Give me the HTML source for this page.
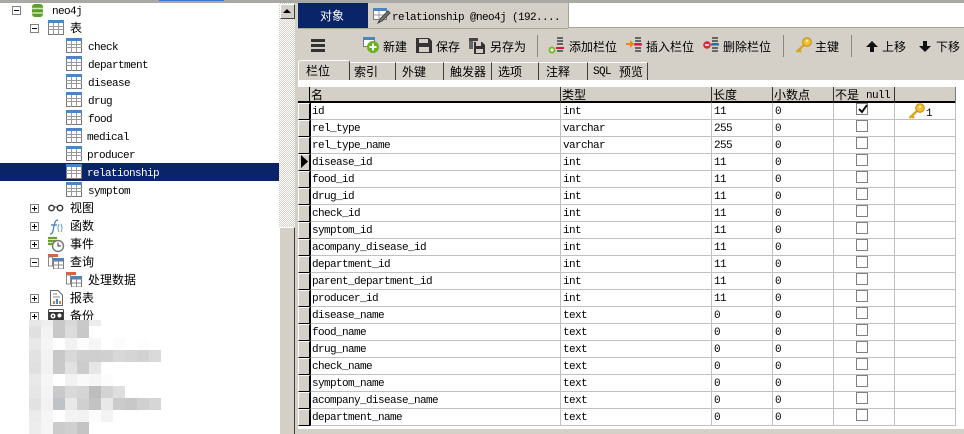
<!DOCTYPE html>
<html><head><meta charset="utf-8">
<style>
html,body{margin:0;padding:0;background:#fff}
#p{position:relative;width:964px;height:434px;overflow:hidden;background:#fff;font-family:"Liberation Mono","WenQuanYi Zen Hei","Noto Sans CJK SC",monospace;font-size:11px;letter-spacing:-.6px;color:#000}
#p div,#p svg{position:absolute}
.t{white-space:nowrap;line-height:14px;height:14px}
.c{font-family:"WenQuanYi Zen Hei","Noto Sans CJK SC",sans-serif;font-size:12px;letter-spacing:0}
.b{width:7px;height:7px;border:1px solid #808080;background:#fff}
.b:before{content:"";position:absolute;left:1px;top:3px;width:5px;height:1px;background:#000}
.p:after{content:"";position:absolute;left:3px;top:1px;width:1px;height:5px;background:#000}
.tab{top:62px;height:18px;background:#d4d0c8;border-right:1px solid #404040;border-top:1px solid #fff;box-sizing:border-box}
table{position:absolute;left:298px;top:103px;border-collapse:separate;border-spacing:0;table-layout:fixed;width:658px}
td{box-sizing:border-box;height:17px;padding:3px 0 0 2px;border-right:1px solid #c0c0c0;border-bottom:1px solid #c0c0c0;font-size:11px;line-height:13px;white-space:nowrap;overflow:hidden;vertical-align:top}
td:first-child{background:#d4d0c8;border-left:1px solid #fff;border-top:1px solid #fff;border-right:1px solid #000;border-bottom:1px solid #000;padding:0}
td:nth-child(2){border-left:1px solid #000;padding-left:1px;border-right:1px solid #c0c0c0}
td.k{padding:0}
td i{display:block;width:10px;height:10px;border:1px solid #808080;background:#fff;margin:0 0 0 22px;position:relative}
</style></head><body>
<div id="p">
<svg width="0" height="0" style="left:0;top:0">
<defs>
<g id="tb"><rect x=".5" y=".5" width="15" height="14" fill="#fff" stroke="#777"/><rect x="0" y="0" width="16" height="3" fill="#4a86c5"/><path d="M0 6.5H16M0 9.5H16M5.5 3V15M10.5 3V15" stroke="#999" fill="none"/></g>
<g id="qr"><rect x="0" y="0" width="10" height="3" fill="#e0603e"/><rect x=".5" y="3" width="4" height="9" fill="#fff" stroke="#888"/><rect x="5" y="4" width="11" height="3" fill="#4a86c5"/><rect x="5.5" y="7" width="10" height="8" fill="#fff" stroke="#777"/><path d="M5 11H16M10.5 7V15" stroke="#888"/></g>
<g id="ky"><circle cx="12" cy="5" r="4.3" fill="#f5c02c" stroke="#c08a10"/><path d="M9 8L1.5 15M4 13l2 2" stroke="#d9a520" stroke-width="2.4" fill="none"/><circle cx="12" cy="4" r="1.2" fill="#fff3b0"/></g>
<g id="ln"><path d="M9 1H15M9 4H15M9 7H15M9 14H15M9 11H15" stroke="#666" stroke-width="2"/></g>
</defs></svg>

<!-- top line -->
<div style="left:0;top:0;width:964px;height:3px;background:#a8a8a4"></div>
<div style="left:159px;top:0;width:65px;height:1px;background:#3a78d8"></div>

<!-- tree -->
<div style="left:0;top:163px;width:279px;height:18px;background:#0a246a"></div>
<div class="b" style="left:12px;top:6px"></div>
<svg style="left:31px;top:3px" width="14" height="15"><rect x="1" y="1" width="11" height="13" rx="3" fill="#5aa028"/><path d="M1 5.5H12M1 10H12" stroke="#cfe8b0" stroke-width="1.4"/></svg>
<div class="t" style="left:52px;top:5px">neo4j</div>
<div class="b" style="left:30px;top:24px"></div>
<svg style="left:48px;top:20px" width="16" height="15"><use href="#tb"/></svg>
<div class="t c" style="left:70px;top:21px">表</div>

<svg style="left:66px;top:38px" width="16" height="15"><use href="#tb"/></svg><div class="t" style="left:88px;top:41px">check</div>
<svg style="left:66px;top:56px" width="16" height="15"><use href="#tb"/></svg><div class="t" style="left:88px;top:59px">department</div>
<svg style="left:66px;top:74px" width="16" height="15"><use href="#tb"/></svg><div class="t" style="left:88px;top:77px">disease</div>
<svg style="left:66px;top:92px" width="16" height="15"><use href="#tb"/></svg><div class="t" style="left:88px;top:95px">drug</div>
<svg style="left:66px;top:110px" width="16" height="15"><use href="#tb"/></svg><div class="t" style="left:88px;top:113px">food</div>
<svg style="left:66px;top:128px" width="16" height="15"><use href="#tb"/></svg><div class="t" style="left:87px;top:131px">medical</div>
<svg style="left:66px;top:146px" width="16" height="15"><use href="#tb"/></svg><div class="t" style="left:87px;top:149px">producer</div>
<svg style="left:66px;top:164px" width="16" height="15"><use href="#tb"/></svg><div class="t" style="left:87px;top:167px;color:#fff">relationship</div>
<svg style="left:66px;top:182px" width="16" height="15"><use href="#tb"/></svg><div class="t" style="left:88px;top:185px">symptom</div>

<div class="b p" style="left:30px;top:204px"></div>
<svg style="left:48px;top:203px" width="16" height="10"><circle cx="3.5" cy="5" r="2.7" fill="#fff" stroke="#333" stroke-width="1.4"/><circle cx="12" cy="5" r="2.7" fill="#fff" stroke="#333" stroke-width="1.4"/><path d="M6 4H9.500" stroke="#333"/></svg>
<div class="t c" style="left:70px;top:201px">视图</div>

<div class="b p" style="left:30px;top:222px"></div>
<svg style="left:48px;top:219px" width="16" height="16"><path d="M2 15C5 15 5 12 6 7C7 2 8 1 10 1M3 6H9" stroke="#3f78b8" fill="none" stroke-width="1.2"/><path d="M11 5Q9 9 11 13M13 5Q15 9 13 13" stroke="#6a9ad0" fill="none"/></svg>
<div class="t c" style="left:70px;top:219px">函数</div>

<div class="b p" style="left:30px;top:240px"></div>
<svg style="left:48px;top:236px" width="17" height="17"><path d="M0 2H9M0 5H8M0 8H6" stroke="#6aa030" stroke-width="2.200"/><circle cx="10" cy="10" r="5.5" fill="#fff" stroke="#777" stroke-width="1.400"/><path d="M10 6.500V10H13" stroke="#333" fill="none"/></svg>
<div class="t c" style="left:70px;top:237px">事件</div>

<div class="b" style="left:30px;top:258px"></div>
<svg style="left:48px;top:254px" width="16" height="15"><use href="#qr"/></svg>
<div class="t c" style="left:70px;top:255px">查询</div>
<svg style="left:66px;top:272px" width="16" height="15"><use href="#qr"/></svg>
<div class="t c" style="left:88px;top:273px">处理数据</div>

<div class="b p" style="left:30px;top:294px"></div>
<svg style="left:50px;top:290px" width="13" height="16"><path d="M.5.500H8L12.500 5V15.500H.5Z" fill="#fff" stroke="#666"/><path d="M3 4H7M3 7H10" stroke="#888"/><rect x="3" y="11" width="2" height="3" fill="#e08030"/><rect x="6" y="9" width="2" height="5" fill="#4a86c5"/><rect x="9" y="11" width="2" height="3" fill="#e08030"/></svg>
<div class="t c" style="left:70px;top:291px">报表</div>

<div class="b p" style="left:30px;top:312px"></div>
<svg style="left:48px;top:309px" width="16" height="14"><rect x=".5" y=".5" width="15" height="12" rx="1" fill="#fff" stroke="#444"/><rect x="1" y="3" width="14" height="8" fill="#333"/><circle cx="5" cy="7" r="2.500" fill="#fff"/><circle cx="5" cy="7" r="1" fill="#333"/><circle cx="11.500" cy="6.500" r="2" fill="#fff"/></svg>
<div class="t c" style="left:70px;top:309px">备份</div>

<!-- mosaic -->
<svg style="left:29px;top:320px" width="132" height="114" shape-rendering="crispEdges">
<rect x="0" y="0" width="12" height="6" fill="#e8e8e8"/><rect x="12" y="0" width="12" height="6" fill="#eeeeee"/><rect x="24" y="0" width="12" height="6" fill="#c8c8c8"/><rect x="36" y="0" width="12" height="6" fill="#d8d8d8"/><rect x="48" y="0" width="12" height="6" fill="#c9c9c9"/><rect x="60" y="0" width="12" height="6" fill="#ececec"/>
<rect x="0" y="6" width="12" height="12" fill="#e0e0e0"/><rect x="12" y="6" width="12" height="12" fill="#f3f3f3"/><rect x="24" y="6" width="12" height="12" fill="#c8c8c8"/><rect x="36" y="6" width="12" height="12" fill="#dcdcdc"/><rect x="48" y="6" width="12" height="12" fill="#c8c8c8"/>
<rect x="0" y="18" width="12" height="12" fill="#e9e9e9"/><rect x="12" y="18" width="12" height="12" fill="#f5f5f5"/><rect x="36" y="18" width="12" height="12" fill="#f2f2f2"/><rect x="48" y="18" width="12" height="12" fill="#fcfcfc"/><rect x="60" y="18" width="12" height="12" fill="#f6f6f6"/><rect x="84" y="18" width="12" height="12" fill="#fcfcfc"/><rect x="108" y="18" width="12" height="12" fill="#fdfdfd"/>
<rect x="0" y="30" width="12" height="12" fill="#e2e2e2"/><rect x="12" y="30" width="12" height="12" fill="#f3f3f3"/><rect x="24" y="30" width="12" height="12" fill="#c8c8c8"/><rect x="36" y="30" width="12" height="12" fill="#d8d8d8"/><rect x="48" y="30" width="24" height="12" fill="#cfcfcf"/><rect x="72" y="30" width="12" height="12" fill="#d0d0d0"/><rect x="84" y="30" width="12" height="12" fill="#d8d8d8"/><rect x="96" y="30" width="12" height="12" fill="#d5d5d5"/><rect x="108" y="30" width="12" height="12" fill="#d2d2d2"/><rect x="120" y="30" width="12" height="12" fill="#dadada"/>
<rect x="0" y="42" width="12" height="12" fill="#e0e0e0"/><rect x="12" y="42" width="12" height="12" fill="#f2f2f2"/><rect x="24" y="42" width="12" height="12" fill="#c9c9c9"/><rect x="36" y="42" width="12" height="12" fill="#e2e2e2"/><rect x="48" y="42" width="12" height="12" fill="#cccccc"/><rect x="60" y="42" width="12" height="12" fill="#e6e6e6"/>
<rect x="0" y="54" width="12" height="12" fill="#e9e9e9"/><rect x="12" y="54" width="12" height="12" fill="#f6f6f6"/><rect x="36" y="54" width="12" height="12" fill="#f2f2f2"/><rect x="48" y="54" width="12" height="12" fill="#f9f9f9"/><rect x="60" y="54" width="12" height="12" fill="#f6f6f6"/><rect x="72" y="54" width="12" height="12" fill="#fcfcfc"/>
<rect x="0" y="66" width="12" height="12" fill="#e6e6e6"/><rect x="12" y="66" width="12" height="12" fill="#f4f4f4"/><rect x="24" y="66" width="12" height="12" fill="#c9c9c9"/><rect x="36" y="66" width="12" height="12" fill="#d9d9d9"/><rect x="48" y="66" width="12" height="12" fill="#d5d5d5"/><rect x="60" y="66" width="12" height="12" fill="#bdbdbd"/><rect x="72" y="66" width="12" height="12" fill="#d3d3d3"/><rect x="84" y="66" width="12" height="12" fill="#dedede"/>
<rect x="0" y="78" width="12" height="12" fill="#e2e2e2"/><rect x="12" y="78" width="12" height="12" fill="#f2f2f2"/><rect x="24" y="78" width="12" height="12" fill="#bfc3c7"/><rect x="36" y="78" width="12" height="12" fill="#e8e8e8"/><rect x="48" y="78" width="12" height="12" fill="#d0d0d0"/><rect x="60" y="78" width="12" height="12" fill="#c3c3c3"/><rect x="72" y="78" width="12" height="12" fill="#e8e8e8"/><rect x="84" y="78" width="12" height="12" fill="#cbcbcb"/><rect x="96" y="78" width="12" height="12" fill="#c8c8c8"/><rect x="108" y="78" width="12" height="12" fill="#d0d0d0"/><rect x="120" y="78" width="12" height="12" fill="#d6d6d6"/>
<rect x="0" y="90" width="12" height="12" fill="#ebebeb"/><rect x="12" y="90" width="12" height="12" fill="#f5f5f5"/><rect x="36" y="90" width="24" height="12" fill="#f3f3f3"/><rect x="60" y="90" width="12" height="12" fill="#fcfcfc"/><rect x="72" y="90" width="12" height="12" fill="#f3f3f3"/>
<rect x="0" y="102" width="12" height="12" fill="#ededed"/><rect x="12" y="102" width="12" height="12" fill="#f6f6f6"/><rect x="24" y="102" width="12" height="12" fill="#cbcbcb"/><rect x="36" y="102" width="12" height="12" fill="#d0d0d0"/><rect x="48" y="102" width="12" height="12" fill="#c4c4c4"/>
</svg>

<!-- tree scrollbar -->
<div style="left:279px;top:3px;width:16px;height:224px;background:repeating-conic-gradient(#d4d0c8 0 25%,#fff 0 50%) 0 0/2px 2px"></div>
<div style="left:280px;top:4px;width:13px;height:13px;background:#d4d0c8;border:1px solid #fff;border-right-color:#404040;border-bottom-color:#404040;box-sizing:content-box"></div>
<svg style="left:283px;top:8px" width="9" height="6"><path d="M4 1L8 5H0Z" fill="#000"/></svg>
<div style="left:279px;top:227px;width:16px;height:207px;background:#d4d0c8;border-left:1px solid #fff;border-top:1px solid #fff;border-right:1px solid #404040;box-sizing:border-box"></div>

<!-- right panel -->
<div style="left:295px;top:3px;width:669px;height:77px;background:#d4d0c8"></div>
<div style="left:295px;top:80px;width:3px;height:354px;background:#d4d0c8"></div>
<div style="left:298px;top:3px;width:70px;height:25px;background:#0a246a"></div>
<div class="t c" style="left:320px;top:9px;color:#fff">对象</div>
<svg style="left:373px;top:8px" width="19" height="17"><rect x=".5" y=".5" width="13" height="11" fill="#fff" stroke="#777"/><rect width="14" height="3" fill="#4a86c5"/><path d="M.5 7H13M6 3V12" stroke="#999"/><path d="M5 15L7 11L15 3L17 5L9 13Z" fill="#777" stroke="#444"/></svg>
<div class="t" style="left:392px;top:11px">relationship @neo4j (192....</div>
<div style="left:568px;top:3px;width:396px;height:25px;background:#fff;border-left:1px solid #a8a490;border-bottom:1px solid #a8a490;box-sizing:border-box"></div>
<div style="left:298px;top:28px;width:270px;height:1px;background:#a8a490"></div>

<!-- toolbar -->
<svg style="left:311px;top:39px" width="15" height="14"><path d="M0 1.500H14M0 6.500H14M0 11.500H14" stroke="#333" stroke-width="3"/></svg>
<svg style="left:363px;top:37px" width="18" height="17"><rect x=".5" y=".5" width="11" height="9" fill="#fff" stroke="#777"/><rect width="12" height="3" fill="#4a86c5"/><circle cx="10" cy="10" r="6" fill="#6ab023"/><path d="M6.500 10H13.500M10 6.500V13.500" stroke="#fff" stroke-width="2"/></svg>
<div class="t c" style="left:383px;top:40px">新建</div>
<svg style="left:416px;top:38px" width="16" height="15"><path d="M0 0H13L16 3V15H0Z" fill="#333"/><rect x="3" y="1" width="9" height="4" fill="#d4d0c8"/><rect x="3" y="9" width="10" height="5" fill="#d4d0c8"/></svg>
<div class="t c" style="left:436px;top:40px">保存</div>
<svg style="left:469px;top:38px" width="17" height="16"><path d="M0 0H9V3H0Z" fill="#444"/><path d="M0 3H4V11H0Z" fill="#666"/><path d="M5 4H13L16 7V16H5Z" fill="#333"/><rect x="7" y="4" width="5" height="4" fill="#d4d0c8"/><rect x="7" y="11" width="7" height="4" fill="#d4d0c8"/></svg>
<div class="t c" style="left:490px;top:40px">另存为</div>
<div style="left:537px;top:35px;width:1px;height:22px;background:#888"></div>

<svg style="left:548px;top:37px" width="18" height="17"><use href="#ln"/><path d="M8 11H16" stroke="#e0103a" stroke-width="2"/><circle cx="4" cy="13" r="3.500" fill="#7ab82a"/><path d="M2 13H6M4 11V15" stroke="#fff"/></svg>
<div class="t c" style="left:569px;top:40px">添加栏位</div>
<svg style="left:626px;top:37px" width="18" height="17"><use href="#ln"/><path d="M8 7.500H16" stroke="#e0103a" stroke-width="2"/><path d="M0 6H4V3L8 7L4 11V8H0Z" fill="#f08010"/></svg>
<div class="t c" style="left:646px;top:40px">插入栏位</div>
<svg style="left:703px;top:37px" width="18" height="17"><use href="#ln"/><path d="M8 7.500H16" stroke="#1a70a8" stroke-width="2"/><circle cx="4" cy="8" r="3.800" fill="#d82838"/><path d="M2 8H6" stroke="#fff" stroke-width="1.500"/></svg>
<div class="t c" style="left:723px;top:40px">删除栏位</div>
<div style="left:783px;top:35px;width:1px;height:22px;background:#888"></div>
<svg style="left:795px;top:37px" width="17" height="17"><use href="#ky"/></svg>
<div class="t c" style="left:815px;top:40px">主键</div>
<div style="left:851px;top:35px;width:1px;height:22px;background:#888"></div>
<svg style="left:866px;top:41px" width="12" height="11"><path d="M6 0L12 6H8V11H4V6H0Z" fill="#111"/></svg>
<div class="t c" style="left:882px;top:40px">上移</div>
<svg style="left:919px;top:41px" width="12" height="11"><path d="M6 11L12 5H8V0H4V5H0Z" fill="#111"/></svg>
<div class="t c" style="left:936px;top:40px">下移</div>

<!-- tabs -->
<div class="tab" style="left:298px;top:60px;width:52px;height:20px;border-radius:3px 3px 0 0;border-left:1px solid #fff"></div>
<div class="tab" style="left:350px;width:46px"></div>
<div class="tab" style="left:396px;width:48px"></div>
<div class="tab" style="left:444px;width:48px"></div>
<div class="tab" style="left:492px;width:47px"></div>
<div class="tab" style="left:539px;width:49px"></div>
<div class="tab" style="left:588px;width:60px"></div>
<div class="t c" style="left:306px;top:64px">栏位</div>
<div class="t c" style="left:354px;top:65px">索引</div>
<div class="t c" style="left:402px;top:65px">外键</div>
<div class="t c" style="left:450px;top:65px">触发器</div>
<div class="t c" style="left:498px;top:65px">选项</div>
<div class="t c" style="left:546px;top:65px">注释</div>
<div class="t" style="left:593px;top:65px">SQL</div>
<div class="t c" style="left:619px;top:65px">预览</div>

<!-- grid header -->
<div style="left:298px;top:87px;width:658px;height:16px;background:#d4d0c8;border-bottom:2px solid #000;box-sizing:border-box"></div>
<div style="left:309px;top:87px;width:1px;height:16px;background:#000"></div>
<div style="left:560px;top:87px;width:1px;height:16px;background:#333"></div>
<div style="left:711px;top:87px;width:1px;height:16px;background:#333"></div>
<div style="left:772px;top:87px;width:1px;height:16px;background:#333"></div>
<div style="left:833px;top:87px;width:1px;height:16px;background:#333"></div>
<div style="left:894px;top:87px;width:1px;height:16px;background:#333"></div>
<div style="left:955px;top:87px;width:1px;height:16px;background:#777"></div>
<div class="t c" style="left:311px;top:88px">名</div>
<div class="t c" style="left:562px;top:88px">类型</div>
<div class="t c" style="left:713px;top:88px">长度</div>
<div class="t c" style="left:774px;top:88px">小数点</div>
<div class="t c" style="left:835px;top:88px">不是</div>
<div class="t" style="left:866px;top:89px">null</div>

<table>
<colgroup><col style="width:12px"><col style="width:251px"><col style="width:151px"><col style="width:61px"><col style="width:61px"><col style="width:61px"><col style="width:61px"></colgroup>
<tr><td></td><td>id</td><td>int</td><td>11</td><td>0</td><td class="k"><i><svg style="left:1px;top:0" width="10" height="10"><path d="M1 5L4 8L9 1" stroke="#111" stroke-width="2" fill="none"/></svg></i></td><td></td></tr>
<tr><td></td><td>rel_type</td><td>varchar</td><td>255</td><td>0</td><td class="k"><i></i></td><td></td></tr>
<tr><td></td><td>rel_type_name</td><td>varchar</td><td>255</td><td>0</td><td class="k"><i></i></td><td></td></tr>
<tr><td></td><td>disease_id</td><td>int</td><td>11</td><td>0</td><td class="k"><i></i></td><td></td></tr>
<tr><td></td><td>food_id</td><td>int</td><td>11</td><td>0</td><td class="k"><i></i></td><td></td></tr>
<tr><td></td><td>drug_id</td><td>int</td><td>11</td><td>0</td><td class="k"><i></i></td><td></td></tr>
<tr><td></td><td>check_id</td><td>int</td><td>11</td><td>0</td><td class="k"><i></i></td><td></td></tr>
<tr><td></td><td>symptom_id</td><td>int</td><td>11</td><td>0</td><td class="k"><i></i></td><td></td></tr>
<tr><td></td><td>acompany_disease_id</td><td>int</td><td>11</td><td>0</td><td class="k"><i></i></td><td></td></tr>
<tr><td></td><td>department_id</td><td>int</td><td>11</td><td>0</td><td class="k"><i></i></td><td></td></tr>
<tr><td></td><td>parent_department_id</td><td>int</td><td>11</td><td>0</td><td class="k"><i></i></td><td></td></tr>
<tr><td></td><td>producer_id</td><td>int</td><td>11</td><td>0</td><td class="k"><i></i></td><td></td></tr>
<tr><td></td><td>disease_name</td><td>text</td><td>0</td><td>0</td><td class="k"><i></i></td><td></td></tr>
<tr><td></td><td>food_name</td><td>text</td><td>0</td><td>0</td><td class="k"><i></i></td><td></td></tr>
<tr><td></td><td>drug_name</td><td>text</td><td>0</td><td>0</td><td class="k"><i></i></td><td></td></tr>
<tr><td></td><td>check_name</td><td>text</td><td>0</td><td>0</td><td class="k"><i></i></td><td></td></tr>
<tr><td></td><td>symptom_name</td><td>text</td><td>0</td><td>0</td><td class="k"><i></i></td><td></td></tr>
<tr><td></td><td>acompany_disease_name</td><td>text</td><td>0</td><td>0</td><td class="k"><i></i></td><td></td></tr>
<tr><td></td><td>department_name</td><td>text</td><td>0</td><td>0</td><td class="k"><i></i></td><td></td></tr>
</table>
<svg style="left:301px;top:155px" width="7" height="13"><path d="M0 0L7 6.500L0 13Z" fill="#000"/></svg>
<svg style="left:908px;top:103px" width="17" height="17"><use href="#ky"/></svg>
<div class="t" style="left:926px;top:107px">1</div>
<div style="left:295px;top:429px;width:669px;height:5px;background:#d4d0c8"></div>
</div>
</body></html>
